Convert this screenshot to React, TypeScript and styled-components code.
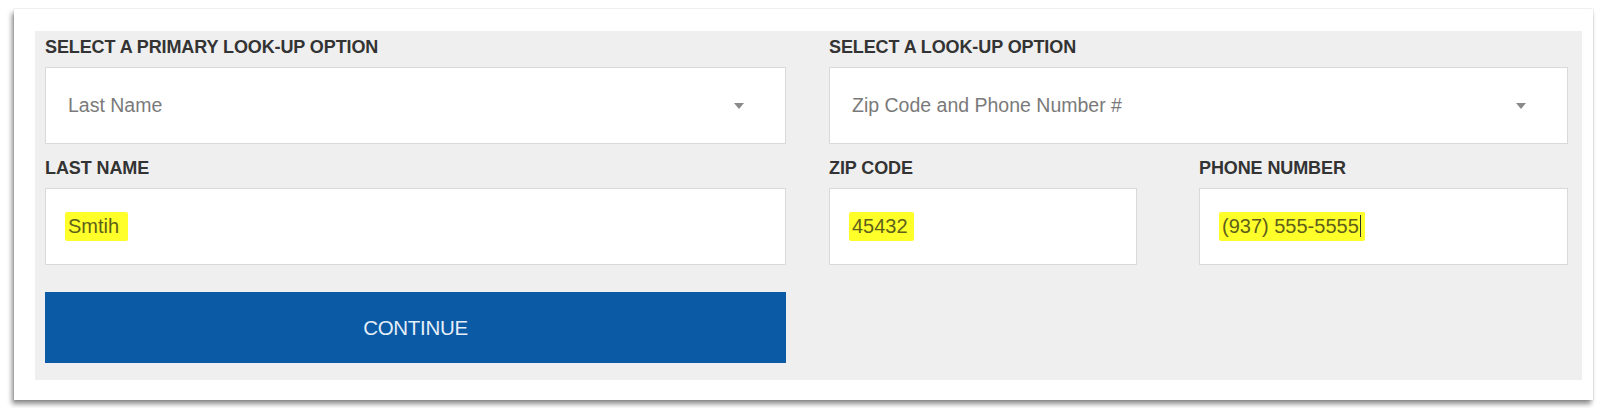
import styled, { createGlobalStyle } from "styled-components";

const GlobalStyle = createGlobalStyle`
  html, body {
    margin: 0;
    padding: 0;
    background: #ffffff;
    font-family: "Liberation Sans", Arial, sans-serif;
  }
`;

const Page = styled.div`
  padding: 9px 7px 8px 14px;
`;

const Card = styled.div`
  background: #ffffff;
  padding: 22px 11px 20px 21px;
  box-shadow: -2px 4px 5px rgba(0, 0, 0, 0.45), 0 0 1px rgba(0, 0, 0, 0.3);
`;

const Panel = styled.div`
  background: #efefef;
  padding: 4px 14px 17px 10px;
  display: grid;
  grid-template-columns: 741px 739px;
  column-gap: 43px;
`;

const Column = styled.div`
  display: flex;
  flex-direction: column;
`;

const Row = styled.div`
  display: grid;
  grid-template-columns: 308px 369px;
  column-gap: 62px;
`;

const Label = styled.div<{ $top?: number }>`
  margin-top: ${(p) => p.$top ?? 0}px;
  height: 24px;
  line-height: 24px;
  font-size: 18px;
  font-weight: bold;
  color: #333333;
  letter-spacing: -0.1px;
  margin-bottom: 8px;
`;

const Box = styled.div`
  box-sizing: border-box;
  height: 77px;
  background: #ffffff;
  border: 1px solid #d9d9d9;
  display: flex;
  align-items: center;
  padding-left: 22px;
  font-size: 19.5px;
`;

const SelectBox = styled(Box)`
  justify-content: space-between;
  padding-right: 41px;
  color: #7a7a7a;
`;

const Caret = styled.svg`
  width: 10px;
  height: 6px;
  fill: #8a8a8a;
`;

const Highlight = styled.span<{ $tail?: number }>`
  background: #ffff2a;
  color: #5f5f1c;
  font-size: 20px;
  padding: 3px ${(p) => p.$tail ?? 4}px 3px 3px;
  margin-left: -3px;
  border-radius: 2px;
`;

const Cursor = styled.span`
  display: inline-block;
  width: 1px;
  height: 22px;
  background: #333;
  vertical-align: -4px;
  margin-left: 1px;
`;

const Button = styled.button`
  margin-top: 27px;
  height: 71px;
  border: none;
  background: #0a5aa5;
  color: #e4eef8;
  font-family: "Liberation Sans", Arial, sans-serif;
  font-size: 20.5px;
  letter-spacing: -0.3px;
  cursor: pointer;
`;

const Select = ({ text }: { text: string }) => (
  <SelectBox>
    <span>{text}</span>
    <Caret viewBox="0 0 10 6">
      <path d="M0 0 L10 0 L5 6 Z" />
    </Caret>
  </SelectBox>
);

const App = () => {
  return (
    <>
      <GlobalStyle />
      <Page>
        <Card>
          <Panel>
            <Column>
              <Label>SELECT A PRIMARY LOOK-UP OPTION</Label>
              <Select text="Last Name" />
              <Label $top={12}>LAST NAME</Label>
              <Box>
                <Highlight $tail={9}>Smtih</Highlight>
              </Box>
              <Button>CONTINUE</Button>
            </Column>
            <Column>
              <Label>SELECT A LOOK-UP OPTION</Label>
              <Select text="Zip Code and Phone Number #" />
              <Row>
                <Column>
                  <Label $top={12}>ZIP CODE</Label>
                  <Box>
                    <Highlight $tail={6}>45432</Highlight>
                  </Box>
                </Column>
                <Column>
                  <Label $top={12}>PHONE NUMBER</Label>
                  <Box>
                    <Highlight>
                      (937) 555-5555
                      <Cursor />
                    </Highlight>
                  </Box>
                </Column>
              </Row>
            </Column>
          </Panel>
        </Card>
      </Page>
    </>
  );
};

export default App;
